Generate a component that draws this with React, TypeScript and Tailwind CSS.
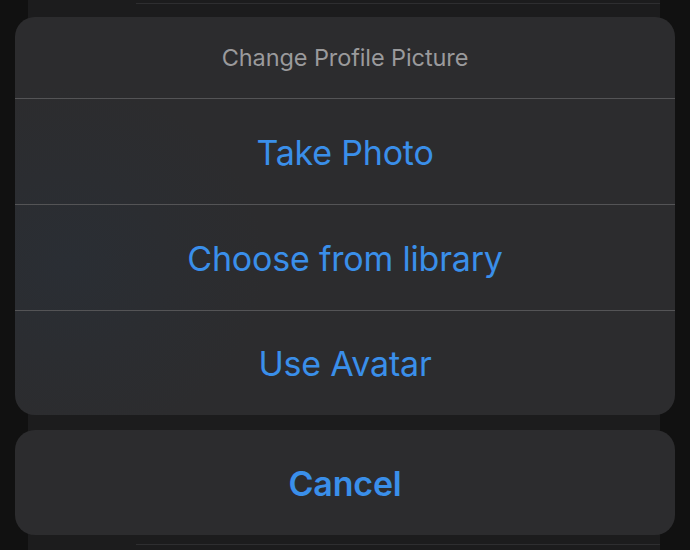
import React from "react";

const font = { fontFamily: "Inter, 'Noto Sans', sans-serif" };

export default function App() {
  return (
    <div className="relative h-[550px] w-[690px] overflow-hidden bg-[#111111]" style={font}>
      {/* background page card */}
      <div className="mx-[28px] flex h-full w-[632px] flex-col justify-between bg-[#1c1c1d] pt-[3px] pb-[5px]">
        <div className="ml-[108px] h-px bg-[#2e2e30]" />
        <div className="ml-[108px] h-px bg-[#2e2e30]" />
      </div>

      {/* action sheet */}
      <div className="absolute left-[15px] right-[15px] top-[17px] flex flex-col gap-[15px]">
        <div className="flex flex-col overflow-hidden rounded-[20px] bg-[#2c2c2e] bg-[radial-gradient(ellipse_30%_45%_at_8%_62%,#2a2e34_0%,#2c2c2e_100%)]">
          <div className="flex h-[82px] items-center justify-center border-b border-[#545456] pt-[1px] text-[23.5px] tracking-[-0.1px] text-[#9a9a9c]">
            Change Profile Picture
          </div>
          <button className="flex h-[106px] items-center justify-center border-b border-[#545456] pt-[1px] text-[34px] tracking-[-0.2px] text-[#3a8fea]">
            Take Photo
          </button>
          <button className="flex h-[106px] items-center justify-center border-b border-[#545456] pt-[1px] text-[34px] tracking-[-0.2px] text-[#3a8fea]">
            Choose from library
          </button>
          <button className="flex h-[104px] items-center justify-center pt-[1px] text-[34px] tracking-[-0.2px] text-[#3a8fea]">
            Use Avatar
          </button>
        </div>
        <button className="flex h-[105px] items-center justify-center rounded-[20px] bg-[#2c2c2e] pt-[1px] text-[34px] font-semibold tracking-[-0.2px] text-[#3a8fea]">
          Cancel
        </button>
      </div>
    </div>
  );
}
